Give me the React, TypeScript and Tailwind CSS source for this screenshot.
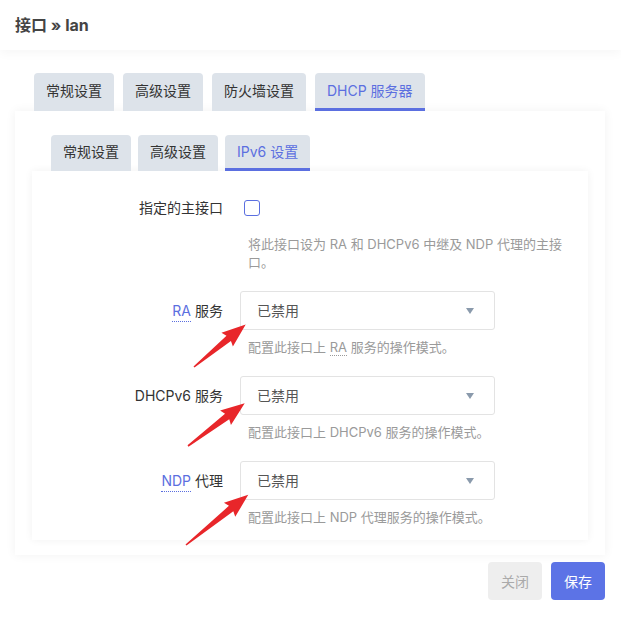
import React from 'react'

const FONT = "font-['Inter','Noto_Sans_CJK_SC',sans-serif]"

const OUTER_TABS = ['常规设置', '高级设置', '防火墙设置', 'DHCP 服务器']
const INNER_TABS = ['常规设置', '高级设置', 'IPv6 设置']

// red callout arrows: tail point, angle, length
const ARROWS = [
  { x: 194, y: 367, a: -39.5, l: 67 },
  { x: 188, y: 446, a: -37, l: 71 },
  { x: 186, y: 545, a: -38.9, l: 80 },
]

function Tab({ label, active, small }: { label: string; active?: boolean; small?: boolean }) {
  return (
    <div
      className={
        (small ? 'h-[36px] ' : 'h-[38px] ') +
        'px-[12px] flex items-center rounded-t-[4px] bg-[#dde3ea] text-[14px] border-b-[3px] ' +
        (active ? 'border-[#5b6fe0] text-[#5b6fe0]' : 'border-transparent text-[#333]')
      }
    >
      {label}
    </div>
  )
}

function Abbr({ children, muted }: { children: React.ReactNode; muted?: boolean }) {
  return (
    <span
      className={
        'border-b border-dotted ' +
        (muted ? 'border-[#9a9a9a]' : 'text-[#5b6fe0] border-[#5b6fe0]')
      }
    >
      {children}
    </span>
  )
}

function Select() {
  return (
    <div className="w-[255px] h-[39px] border border-[#e3e3e3] rounded-[3px] flex items-center justify-between pl-4 pr-[20px] text-[14px] text-[#555]">
      <span>已禁用</span>
      <svg width="8" height="6" viewBox="0 0 8 6">
        <path d="M0 0h8L4 6z" fill="#8a9aac" />
      </svg>
    </div>
  )
}

function Row({ label, control, desc }: { label: React.ReactNode; control: React.ReactNode; desc: React.ReactNode }) {
  return (
    <div className="flex">
      <div className="w-[191px] h-[39px] flex items-center justify-end text-[14px] text-[#333]">{label}</div>
      <div className="ml-[17px] flex flex-col">
        <div className="h-[39px] flex items-center">{control}</div>
        <div className="mt-[8px] pl-2 w-[340px] text-[13px] leading-[18px] text-[#9a9a9a]">{desc}</div>
      </div>
    </div>
  )
}

export default function App() {
  return (
    <div className={`relative w-[621px] h-[625px] bg-white overflow-hidden ${FONT}`}>
      {/* Header */}
      <div className="h-[50px] px-[15px] flex items-center bg-white shadow-[0_3px_10px_rgba(0,0,0,0.04)]">
        <h3 className="text-[16px] font-bold text-[#444]">接口 » lan</h3>
      </div>

      {/* Outer tabs */}
      <div className="mt-[23px] ml-[34px] flex gap-[9px]">
        {OUTER_TABS.map((t) => (
          <Tab key={t} label={t} active={t === 'DHCP 服务器'} />
        ))}
      </div>

      {/* Outer panel */}
      <div className="mx-[15px] w-[590px] pt-[24px] pb-[15px] px-[17px] bg-white shadow-[0_0_10px_rgba(0,0,0,0.06)]">
        <div className="ml-[19px] flex gap-[7px]">
          {INNER_TABS.map((t) => (
            <Tab key={t} label={t} small active={t === 'IPv6 设置'} />
          ))}
        </div>

        {/* Inner panel */}
        <div className="w-[556px] pt-[17px] pb-[14px] bg-white shadow-[0_0_8px_rgba(0,0,0,0.06)] flex flex-col gap-[20px]">
          <Row
            label="指定的主接口"
            control={<div className="ml-1 w-4 h-4 rounded-[3px] border border-[#5b6fe0]" />}
            desc="将此接口设为 RA 和 DHCPv6 中继及 NDP 代理的主接口。"
          />
          <Row
            label={<><Abbr>RA</Abbr><span className="ml-1">服务</span></>}
            control={<Select />}
            desc={<>配置此接口上 <Abbr muted>RA</Abbr> 服务的操作模式。</>}
          />
          <Row
            label="DHCPv6 服务"
            control={<Select />}
            desc="配置此接口上 DHCPv6 服务的操作模式。"
          />
          <Row
            label={<><Abbr>NDP</Abbr><span className="ml-1">代理</span></>}
            control={<Select />}
            desc="配置此接口上 NDP 代理服务的操作模式。"
          />
        </div>
      </div>

      {/* Footer buttons */}
      <div className="mt-[7px] pr-[16px] flex justify-end gap-[9px]">
        <button className="h-[38px] px-[13px] rounded-[4px] bg-[#eeeeee] text-[14px] text-[#aaa]">关闭</button>
        <button className="h-[38px] px-[13px] rounded-[4px] bg-[#5c73e6] text-[14px] text-white">保存</button>
      </div>

      {/* Red callout arrows */}
      <svg className="absolute inset-0 pointer-events-none" width="621" height="625">
        {ARROWS.map((ar, i) => (
          <polygon
            key={i}
            transform={`translate(${ar.x} ${ar.y}) rotate(${ar.a})`}
            points={`0,-0.8 ${ar.l - 22},-3.5 ${ar.l - 24},-9 ${ar.l},0 ${ar.l - 24},9 ${ar.l - 22},3.5 0,0.8`}
            fill="#e8262a"
          />
        ))}
      </svg>
    </div>
  )
}
